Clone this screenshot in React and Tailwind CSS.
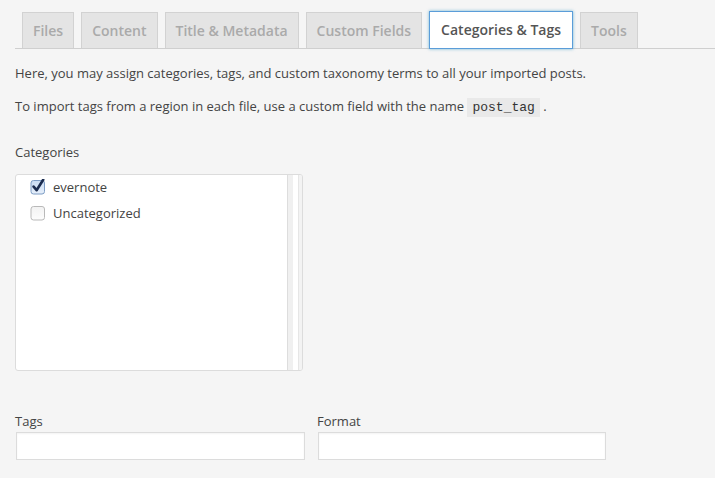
import React from "react";

const tabs = ["Files", "Content", "Title & Metadata", "Custom Fields", "Categories & Tags", "Tools"];

function Check({ checked }) {
  return (
    <svg width="16" height="16" viewBox="0 0 16 16" className="shrink-0">
      <defs>
        <linearGradient id={checked ? "gc" : "gu"} x1="0" y1="0" x2="0" y2="1">
          <stop offset="0" stopColor={checked ? "#c9dcf3" : "#f2f2f2"} />
          <stop offset="1" stopColor={checked ? "#e6effa" : "#fdfdfd"} />
        </linearGradient>
      </defs>
      <rect x="1" y="1.5" width="13.5" height="13.5" rx="2.5" fill={`url(#${checked ? "gc" : "gu"})`} stroke={checked ? "#7d9cc4" : "#b9b9b9"} strokeWidth="1" />
      {checked && (
        <path d="M3.6 7.6 L6.6 11.2 L13.2 0.8" fill="none" stroke="#1b2c4f" strokeWidth="2.6" strokeLinecap="round" strokeLinejoin="round" />
      )}
    </svg>
  );
}

export default function App() {
  return (
    <div className="w-[715px] h-[478px] overflow-hidden bg-[#f5f5f5] text-[#444] text-[13px]" style={{ fontFamily: '"Open Sans", "Liberation Sans", sans-serif' }}>
      <div className="pt-[13px] pl-[15px]">
        <div className="flex items-end gap-[7px] pl-[7px] border-b border-[#cfcfcf] h-[36px]">
          {tabs.map((t) => {
            const active = t === "Categories & Tags";
            return active ? (
              <div key={t} className="relative -mb-px h-[38px] px-[11px] flex items-center bg-white border border-[#5b9dd9] shadow-[0_0_3px_rgba(30,140,190,0.6)] text-[#555] text-[14px] font-semibold leading-none">
                {t}
              </div>
            ) : (
              <div key={t} className="h-[36px] px-[10px] flex items-center bg-[#e4e4e4] border border-[#d2d2d2] border-b-0 text-[#aaa] text-[14px] font-semibold leading-none">
                {t}
              </div>
            );
          })}
        </div>
      </div>

      <div className="px-[15px]">
        <p className="mt-[14px] leading-[20px]">Here, you may assign categories, tags, and custom taxonomy terms to all your imported posts.</p>
        <p className="mt-[13px] leading-[20px]">
          To import tags from a region in each file, use a custom field with the name{" "}
          <code className="bg-[#e9e9e9] px-[5px] py-[2px] text-[13px] text-[#333]" style={{ fontFamily: '"Liberation Mono", monospace' }}>post_tag</code>{" "}.
        </p>

        <div className="mt-[24px] leading-[20px]">Categories</div>
        <div className="mt-[12px] w-[288px] h-[197px] flex border border-[#dcdcdc] rounded-[3px] bg-white overflow-hidden">
          <div className="flex-1 pl-[14px]">
            <label className="flex items-center gap-[7px] h-[24px]">
              <Check checked />
              <span className="leading-none">evernote</span>
            </label>
            <label className="flex items-center gap-[7px] h-[28px]">
              <Check />
              <span className="leading-none">Uncategorized</span>
            </label>
          </div>
          <div className="w-[15px] flex border-l border-[#dddddd]">
            <div className="w-[5px] bg-[#f0f0f0]" />
            <div className="w-[5px] bg-white" />
            <div className="w-[1px] bg-[#e6e6e6]" />
            <div className="flex-1 bg-[#f3f3f3]" />
          </div>
        </div>

        <div className="mt-[40px] flex gap-[12px]">
          <div className="w-[290px]">
            <div className="leading-[20px]">Tags</div>
            <div className="mt-[1px] ml-px h-[28px] border border-[#dcdcdc] bg-white shadow-[inset_0_1px_2px_rgba(0,0,0,0.05)]" />
          </div>
          <div className="w-[290px]">
            <div className="leading-[20px]">Format</div>
            <div className="mt-[1px] ml-[1px] w-[288px] h-[28px] border border-[#dcdcdc] bg-white shadow-[inset_0_1px_2px_rgba(0,0,0,0.05)]" />
          </div>
        </div>
      </div>
    </div>
  );
}
